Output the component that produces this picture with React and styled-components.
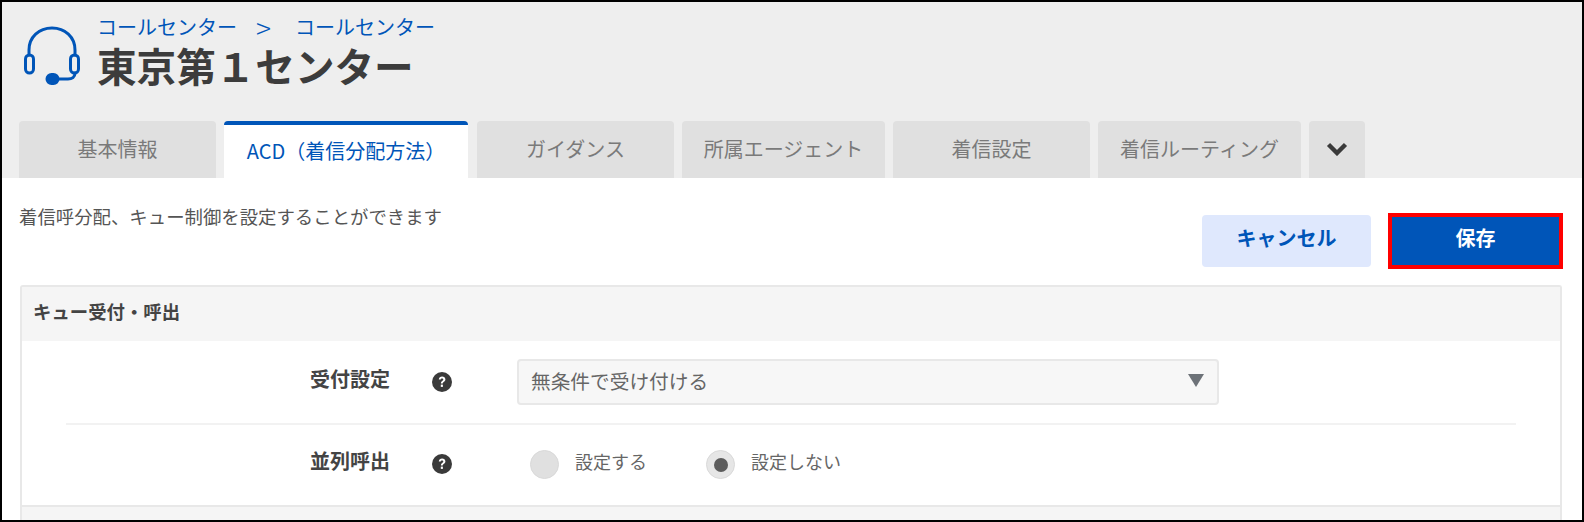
import React from "react";
import styled, { createGlobalStyle } from "styled-components";

const GlobalStyle = createGlobalStyle`
  html, body {
    margin: 0;
    padding: 0;
    height: 522px;
    overflow: hidden;
    background: #fff;
  }
  * { box-sizing: border-box; }
`;

const Frame = styled.div`
  width: 1584px;
  height: 522px;
  border: 2px solid #000;
  overflow: hidden;
  font-family: "Noto Sans CJK JP", "Noto Sans", sans-serif;
  color: #555;
  background: #fff;
`;

const Header = styled.header`
  height: 176px;
  background: #eee;
  padding: 13px 0 0 17px;
  display: flex;
  flex-direction: column;
`;

const TitleRow = styled.div`
  height: 106px;
  padding-left: 5px;
  display: flex;
  align-items: flex-start;
  gap: 15px;
`;

const Heading = styled.div`
  display: flex;
  flex-direction: column;
  margin-top: -1px;
`;

const Breadcrumb = styled.div`
  display: flex;
  align-items: center;
  gap: 19px;
  height: 26px;
  font-size: 20px;
  line-height: 26px;
  color: #0055b8;
`;

const Crumb = styled.span`
  margin-right: 5px;
  font-size: 28px;
  font-weight: 300;
`;

const Title = styled.h1`
  margin: 0;
  font-size: 39.6px;
  line-height: 50px;
  font-weight: 700;
  color: #3c3c3c;
`;

const Tabs = styled.nav`
  display: flex;
  gap: 8px;
  height: 57px;
`;

const Tab = styled.div`
  width: ${(p) => p.$w}px;
  margin-right: ${(p) => (p.$active ? "1px" : "0")};
  padding-bottom: 2px;
  display: flex;
  align-items: center;
  justify-content: center;
  font-size: 20px;
  border-radius: 4px 4px 0 0;
  background: ${(p) => (p.$active ? "#fff" : "#e0e0e0")};
  color: ${(p) => (p.$active ? "#0055b8" : "#7a7a7a")};
  border-top: ${(p) => (p.$active ? "4px solid #0055b8" : "none")};
`;

const Body = styled.main`
  padding: 0 19px 0 18px;
`;

const Toolbar = styled.div`
  height: 107px;
  display: flex;
  justify-content: space-between;
  align-items: flex-start;
`;

const Desc = styled.p`
  margin: 25px 0 0 -1px;
  font-size: 18.4px;
  line-height: 26px;
  color: #555;
`;

const Actions = styled.div`
  display: flex;
  align-items: center;
  gap: 17px;
  margin-top: 35px;
`;

const Button = styled.button`
  width: ${(p) => (p.$primary ? "175px" : "169px")};
  height: ${(p) => (p.$primary ? "56px" : "52px")};
  padding: 0 0 7px;
  font-family: inherit;
  font-size: 20px;
  font-weight: 700;
  border-radius: ${(p) => (p.$primary ? "0" : "4px")};
  background: ${(p) => (p.$primary ? "#0055b8" : "#dfe8fd")};
  color: ${(p) => (p.$primary ? "#fff" : "#0055b8")};
  border: ${(p) => (p.$primary ? "4px solid #f00" : "none")};
`;

const Panel = styled.section`
  margin-right: 1px;
  border: 2px solid #e8e8e8;
  border-bottom: none;
  border-radius: 3px 3px 0 0;
`;

const PanelHead = styled.h2`
  margin: 0;
  height: 54px;
  padding-left: 11px;
  background: #f5f5f5;
  font-size: 18.4px;
  font-weight: 700;
  line-height: 48px;
  color: #444;
`;

const Rows = styled.div`
  padding: 0 44px;
`;

const Row = styled.div`
  height: ${(p) => p.$h}px;
  padding-bottom: ${(p) => (p.$divided ? "0" : "2px")};
  display: grid;
  grid-template-columns: 324px 127px 1fr;
  align-items: center;
  border-bottom: ${(p) => (p.$divided ? "2px solid #f2f2f2" : "none")};
`;

const Label = styled.div`
  margin-bottom: 6px;
  text-align: right;
  font-size: 20px;
  font-weight: 700;
  color: #444;
  line-height: 26px;
`;

const HelpSlot = styled.div`
  display: flex;
  padding-left: 42px;
`;

const Select = styled.div`
  width: 702px;
  height: 46px;
  padding: 0 13px 4px 12px;
  display: flex;
  align-items: center;
  justify-content: space-between;
  background: #f7f7f7;
  border: 2px solid #e8e8e8;
  border-radius: 4px;
  font-size: 19.7px;
  color: #666;
`;

const Caret = styled.span`
  width: 0;
  height: 0;
  border-left: 8px solid transparent;
  border-right: 8px solid transparent;
  border-top: 13px solid #6d7278;
`;

const RadioGroup = styled.div`
  display: flex;
  gap: 30px;
`;

const RadioItem = styled.label`
  display: flex;
  align-items: center;
  gap: 16px;
  margin-left: ${(p) => p.$indent || 0}px;
  font-size: 18px;
  color: #666;
`;

const RadioDot = styled.span`
  width: 29px;
  height: 29px;
  border-radius: 50%;
  background: ${(p) => (p.$on ? "#e6e6e6" : "#e0e0e0")};
  border: 1px solid #d9d9d9;
  display: flex;
  align-items: center;
  justify-content: center;
  margin-top: 1px;

  &::after {
    content: "";
    width: 14px;
    height: 14px;
    border-radius: 50%;
    background: ${(p) => (p.$on ? "#5c5c5c" : "transparent")};
  }
`;

const RadioText = styled.span`
  margin-top: -6px;
`;

const PanelFoot = styled.div`
  height: 20px;
  background: #f5f5f5;
  border-top: 2px solid #e8e8e8;
`;

const HeadsetIcon = () => (
  <svg width="58" height="60" viewBox="0 0 58 60" fill="none" stroke="#0055b8" strokeWidth="3" strokeLinecap="round" style={{ marginTop: 11 }}>
    <path d="M5 29 V24 C5 11 15 2 28 2 C41 2 51 11 51 24 V29" />
    <rect x="1.5" y="29" width="8" height="18" rx="4" />
    <rect x="46.5" y="29" width="8" height="18" rx="4" />
    <path d="M51 47 C51 51 48 53 44 53 H33" />
    <rect x="23" y="48.5" width="11" height="9" rx="4.5" fill="#0055b8" />
  </svg>
);

const HelpIcon = () => (
  <svg width="20" height="20" viewBox="0 0 20 20">
    <circle cx="10" cy="10" r="10" fill="#3a3a3a" />
    <path d="M6.8 7.6 C6.9 5.6 8.3 4.6 10.1 4.6 C12 4.6 13.4 5.7 13.4 7.4 C13.4 9.6 10.8 9.6 10.8 11.5 H8.9 C8.9 8.8 11.3 8.9 11.3 7.5 C11.3 6.8 10.8 6.4 10 6.4 C9.2 6.4 8.8 6.9 8.7 7.6 Z" fill="#fff" />
    <rect x="8.8" y="12.6" width="2.1" height="2.3" fill="#fff" />
  </svg>
);

const ChevronIcon = () => (
  <svg width="22" height="14" viewBox="0 0 22 14" fill="none" stroke="#3a3a3a" strokeWidth="4.4" strokeLinejoin="miter">
    <path d="M2.5 2.5 L11 11 L19.5 2.5" />
  </svg>
);

const tabs = [
  { label: "基本情報", w: 197 },
  { label: "ACD（着信分配方法）", w: 244, active: true },
  { label: "ガイダンス", w: 197 },
  { label: "所属エージェント", w: 203 },
  { label: "着信設定", w: 197 },
  { label: "着信ルーティング", w: 203 },
];

export default function App() {
  return (
    <Frame>
      <GlobalStyle />
      <Header>
        <TitleRow>
          <HeadsetIcon />
          <Heading>
            <Breadcrumb>
              <span>コールセンター</span>
              <Crumb>&gt;</Crumb>
              <span>コールセンター</span>
            </Breadcrumb>
            <Title>東京第１センター</Title>
          </Heading>
        </TitleRow>
        <Tabs>
          {tabs.map((t) => (
            <Tab key={t.label} $w={t.w} $active={t.active}>
              {t.label}
            </Tab>
          ))}
          <Tab $w={56}>
            <ChevronIcon />
          </Tab>
        </Tabs>
      </Header>
      <Body>
        <Toolbar>
          <Desc>着信呼分配、キュー制御を設定することができます</Desc>
          <Actions>
            <Button>キャンセル</Button>
            <Button $primary>保存</Button>
          </Actions>
        </Toolbar>
        <Panel>
          <PanelHead>キュー受付・呼出</PanelHead>
          <Rows>
            <Row $h={84} $divided>
              <Label>受付設定</Label>
              <HelpSlot>
                <HelpIcon />
              </HelpSlot>
              <Select>
                無条件で受け付ける
                <Caret />
              </Select>
            </Row>
            <Row $h={80}>
              <Label>並列呼出</Label>
              <HelpSlot>
                <HelpIcon />
              </HelpSlot>
              <RadioGroup>
                <RadioItem $indent={13}>
                  <RadioDot />
                  <RadioText>設定する</RadioText>
                </RadioItem>
                <RadioItem $indent={29}>
                  <RadioDot $on />
                  <RadioText>設定しない</RadioText>
                </RadioItem>
              </RadioGroup>
            </Row>
          </Rows>
          <PanelFoot />
        </Panel>
      </Body>
    </Frame>
  );
}
